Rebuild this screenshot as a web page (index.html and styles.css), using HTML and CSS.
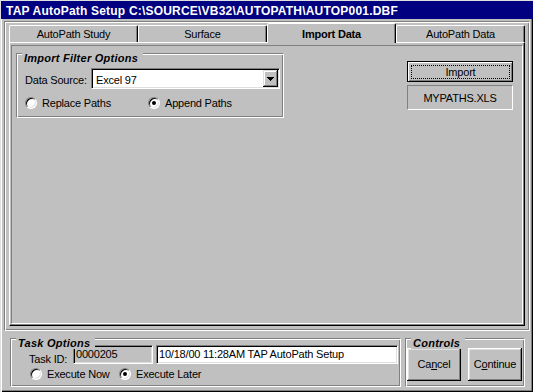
FILE: index.html
```html
<!DOCTYPE html>
<html lang="en">
<head>
<meta charset="UTF-8">
<title>TAP AutoPath Setup</title>
<link rel="stylesheet" href="styles.css">
</head>
<body>

  <div class="window">
    <div class="titlebar">TAP AutoPath Setup C:\SOURCE\VB32\AUTOPATH\AUTOP001.DBF</div>

    <div class="tabctl">
      <div class="tabs">
        <div class="tab">AutoPath Study</div>
        <div class="tab">Surface</div>
        <div class="tab active">Import Data</div>
        <div class="tab">AutoPath Data</div>
      </div>

      <div class="panel">
        <div class="panel-inner">
          <div class="frame import-frame">
            <span class="frame-label">Import Filter Options</span>
            <div class="field-row">
              <label class="field-label">Data Source:</label>
              <div class="combo">
                <span class="combo-text">Excel 97</span>
                <span class="combo-btn">
                  <svg width="7" height="4" viewBox="0 0 7 4" shape-rendering="crispEdges">
                    <rect x="0" y="0" width="7" height="1"/>
                    <rect x="1" y="1" width="5" height="1"/>
                    <rect x="2" y="2" width="3" height="1"/>
                    <rect x="3" y="3" width="1" height="1"/>
                  </svg>
                </span>
              </div>
            </div>
            <div class="radio-row">
              <div class="option replace"><span class="radio"></span>Replace Paths</div>
              <div class="option"><span class="radio checked"></span>Append Paths</div>
            </div>
          </div>

          <div class="import-col">
            <button class="btn btn-default"><span class="focus">Import</span></button>
            <div class="file-label">MYPATHS.XLS</div>
          </div>
        </div>
      </div>
    </div>

    <div class="bottom">
      <div class="frame task-frame">
        <span class="frame-label">Task Options</span>
        <div class="task-row">
          <span class="task-label">Task ID:</span>
          <div class="textbox tb-id">0000205</div>
          <div class="textbox tb-desc">10/18/00 11:28AM TAP AutoPath Setup</div>
        </div>
        <div class="radio-row task-radios">
          <div class="option now"><span class="radio"></span>Execute Now</div>
          <div class="option"><span class="radio checked"></span>Execute Later</div>
        </div>
      </div>

      <div class="frame controls-frame">
        <span class="frame-label">Controls</span>
        <button class="btn btn-push">Ca<u>n</u>cel</button>
        <button class="btn btn-push">C<u>o</u>ntinue</button>
      </div>
    </div>
  </div>

</body>
</html>
```

FILE: styles.css
```css
* {
  box-sizing: border-box;
}
body {
  margin: 0;
  background-color: #c0c0c0;
  font-family: "Liberation Sans", Arial, sans-serif;
  font-size: 11px;
  letter-spacing: -0.2px;
  color: #000;
}
.window {
  width: 533px;
  height: 392px;
  padding: 1px 0 0 1px;
  overflow: hidden;
  background-color: #c0c0c0;
  box-shadow: inset 1px 1px #dfdfdf, inset 2px 2px #fff, inset -1px -1px #000, inset -2px -2px #808080;
}
.titlebar {
  height: 18px;
  padding: 2px 0 0 5px;
  line-height: 16px;
  background-color: #000080;
  color: #fff;
  font-size: 12px;
  font-weight: bold;
  letter-spacing: 0.2px;
  white-space: nowrap;
}

/* tab control */
.tabctl {
  height: 310px;
  margin: 2px 3px 0 3px;
  padding: 1px 4px 4px 4px;
  border: 1px solid;
  border-color: #808080 #fff #fff #808080;
  box-shadow: inset 1px 1px #fff, inset -1px -1px #808080;
}
.tabs {
  display: flex;
  align-items: flex-end;
  height: 19px;
}
.tab {
  width: 129px;
  height: 17px;
  display: flex;
  align-items: center;
  justify-content: center;
  border: 1px solid;
  border-bottom: 0;
  border-color: #fff #000 transparent #fff;
  border-radius: 2px 2px 0 0;
  box-shadow: inset -1px 0 #808080;
  white-space: nowrap;
}
.tab.active {
  height: 20px;
  margin-bottom: -1px;
  position: relative;
  z-index: 1;
  background-color: #c0c0c0;
  font-weight: bold;
}
.panel {
  height: 284px;
  padding: 2px 1px 1px 1px;
  border: 1px solid;
  border-color: #fff #000 #000 #fff;
  box-shadow: inset -1px -1px #808080;
}
.panel-inner {
  height: 100%;
  display: flex;
  align-items: flex-start;
  border: 1px solid;
  border-color: #808080 #fff #fff #808080;
}

/* frames */
.frame {
  position: relative;
  border: 1px solid;
  border-color: #808080 #fff #fff #808080;
  box-shadow: inset 1px 1px #fff, inset -1px -1px #808080;
}
.frame-label {
  position: absolute;
  top: -1px;
  left: 5px;
  padding: 0 5px 0 2px;
  line-height: 11px;
  background-color: #c0c0c0;
  font-weight: bold;
  font-style: italic;
  letter-spacing: 0.25px;
  white-space: nowrap;
}
.import-frame {
  width: 268px;
  height: 65px;
  margin: 7px 0 0 4px;
  padding: 14px 0 0 8px;
}
.field-row {
  display: flex;
  align-items: flex-start;
}
.field-label {
  width: 66px;
  padding-top: 6px;
  line-height: 13px;
}
.combo {
  width: 189px;
  height: 21px;
  display: flex;
  padding: 1px;
  background-color: #fff;
  border: 1px solid;
  border-color: #808080 #fff #fff #808080;
  box-shadow: inset 1px 1px #000, inset -1px -1px #dfdfdf;
}
.combo-text {
  flex: 1;
  padding: 4px 0 0 3px;
  line-height: 13px;
}
.combo-btn {
  width: 15px;
  height: 17px;
  display: flex;
  align-items: center;
  justify-content: center;
  background-color: #c0c0c0;
  box-shadow: inset -1px -1px #000, inset 1px 1px #dfdfdf, inset -2px -2px #808080, inset 2px 2px #fff;
}

/* radios */
.radio-row {
  display: flex;
  margin-top: 8px;
}
.option {
  display: flex;
  align-items: center;
  height: 12px;
  line-height: 13px;
  white-space: nowrap;
}
.option.replace {
  width: 123px;
}
.option.now {
  width: 89px;
}
.radio {
  position: relative;
  flex: none;
  width: 12px;
  height: 12px;
  margin-right: 5px;
  border-radius: 50%;
  background-color: #fff;
  border: 1px solid;
  border-color: #808080 #fff #fff #808080;
  box-shadow: inset 1px 1px #000, inset -1px -1px #dfdfdf;
}
.radio.checked::after {
  content: "";
  position: absolute;
  left: 3px;
  top: 3px;
  width: 4px;
  height: 4px;
  border-radius: 50%;
  background-color: #000;
}

/* import column */
.import-col {
  width: 106px;
  margin: 15px 9px 0 auto;
}
.btn {
  display: flex;
  align-items: center;
  justify-content: center;
  padding: 0;
  border: 0;
  background-color: #c0c0c0;
  font: inherit;
  letter-spacing: inherit;
  color: #000;
}
.btn-default {
  width: 106px;
  height: 21px;
  padding: 3px 2px 2px 3px;
  border: 1px solid #000;
  box-shadow: inset 1px 1px #fff, inset -1px -1px #808080;
}
.focus {
  flex: 1;
  align-self: stretch;
  display: flex;
  align-items: center;
  justify-content: center;
  line-height: 11px;
  border: 1px dotted #000;
}
.file-label {
  height: 25px;
  margin-top: 3px;
  display: flex;
  align-items: center;
  justify-content: center;
  border: 1px solid;
  border-color: #808080 #fff #fff #808080;
}

/* bottom frames */
.bottom {
  display: flex;
  gap: 4px;
  margin-top: 7px;
  padding-left: 9px;
}
.task-frame {
  width: 391px;
  height: 49px;
  padding: 6px 0 0 18px;
}
.task-row {
  display: flex;
  align-items: flex-end;
}
.task-label {
  width: 44px;
  margin-bottom: -2px;
  line-height: 13px;
}
.textbox {
  height: 19px;
  padding: 2px 0 0 2px;
  line-height: 13px;
  white-space: nowrap;
  overflow: hidden;
  border: 1px solid;
  border-color: #808080 #fff #fff #808080;
  box-shadow: inset 1px 1px #000, inset -1px -1px #dfdfdf;
}
.tb-id {
  width: 80px;
  background-color: #c0c0c0;
}
.tb-desc {
  width: 242px;
  margin-left: 3px;
  background-color: #fff;
}
.task-radios {
  margin: 4px 0 0 1px;
}
.controls-frame {
  width: 120px;
  height: 49px;
  display: flex;
  align-items: flex-start;
  gap: 7px;
  padding: 9px 0 0 1px;
}
.btn-push {
  width: 54px;
  height: 33px;
  line-height: 13px;
  box-shadow: inset -1px -1px #000, inset 1px 1px #fff, inset -2px -2px #808080, inset 2px 2px #dfdfdf;
}
```
